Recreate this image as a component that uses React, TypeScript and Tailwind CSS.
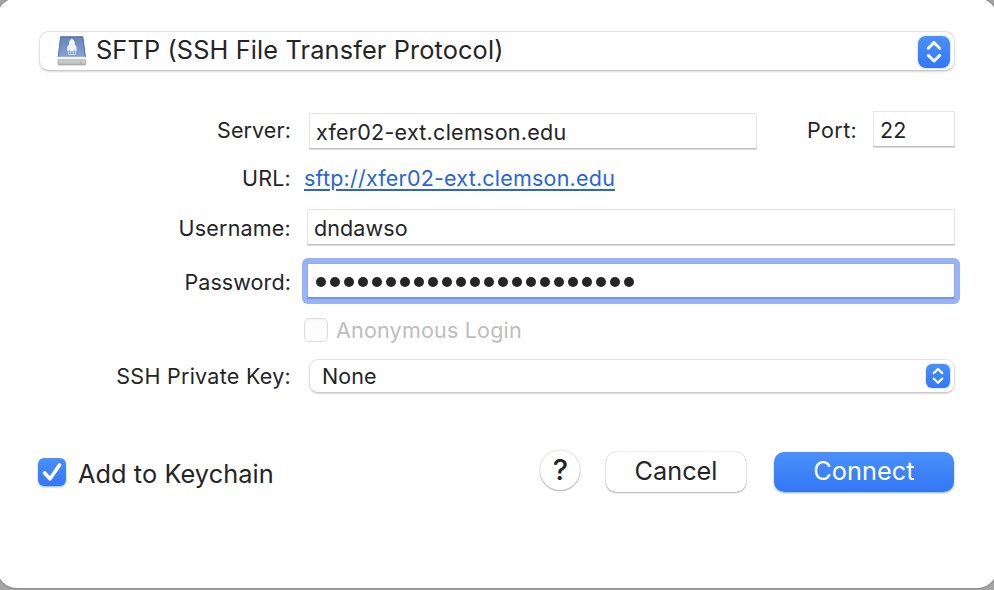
import type { ReactNode } from "react";

function Row({ className, label, labelClass = "", children }: { className: string; label?: string; labelClass?: string; children: ReactNode }) {
  return (
    <div className={`flex items-start ${className}`}>
      <div className={`w-[291px] shrink-0 text-right whitespace-nowrap leading-[26px] ${labelClass}`}>{label}</div>
      {children}
    </div>
  );
}

function Field({ className, children }: { className: string; children: ReactNode }) {
  return (
    <div
      className={`flex h-[36px] items-center border border-[#e6e6e6] border-b-[#c2c2c2] bg-white pt-[3px] pl-1.5 whitespace-nowrap shadow-[0_1px_0_#dcdcdc] ${className}`}
    >
      {children}
    </div>
  );
}

function Stepper({ className, size }: { className: string; size: number }) {
  return (
    <div
      className={`flex shrink-0 items-center justify-center bg-linear-to-b from-[#4a90f7] to-[#3377f6] shadow-[0_0_2px_#8bb5f8] ${className}`}
    >
      <svg width={size} height={size} viewBox="0 0 32 32" fill="none" stroke="white" strokeWidth="2.9" strokeLinecap="round" strokeLinejoin="round">
        <path d="M10.3 12.2 16 6.6l5.7 5.6M10.3 19.4 16 25l5.7-5.6" />
      </svg>
    </div>
  );
}

function DriveIcon() {
  return (
    <svg width="30" height="31" viewBox="0 0 30 31" className="shrink-0">
      <defs>
        <linearGradient id="lid" x1="0" y1="0" x2="0" y2="1">
          <stop offset="0" stopColor="#6684b8" />
          <stop offset="1" stopColor="#8ba4d6" />
        </linearGradient>
        <linearGradient id="base" x1="0" y1="0" x2="0" y2="1">
          <stop offset="0" stopColor="#d8d8d8" />
          <stop offset="1" stopColor="#b5b5b5" />
        </linearGradient>
      </defs>
      <path d="M3.6 0.6h22.2l3 22H1z" fill="url(#lid)" />
      <path d="M3.3 0.9h22.8" stroke="#4e6690" strokeWidth="1" />
      <path d="M3.6 1 1.2 21M25.9 1l2.5 20" stroke="#55719f" strokeWidth="1" />
      <path d="M1.1 20.8h27.6v3.2H1.1z" fill="#f6f6f6" />
      <path d="M1 23.8h27.8v4.2q0 1-1.2 1H2.2q-1.2 0-1.2-1z" fill="url(#base)" stroke="#909090" strokeWidth="0.6" />
      <circle cx="23.8" cy="26.6" r="0.8" fill="#9dab45" />
      <path d="M14.8 2.4q-2.8 1.6-2.8 4.6v1.6l-1.7 2.2v4.4h2v-1.4h.8v1.6h3.6v-1.6h.8v1.4h2v-4.4l-1.7-2.2V7q0-3-3-4.6z" fill="#f1f4fa" />
      <path d="M11.4 15.2v3.2h7v-3.2M13.4 16v2M16.4 16v2" stroke="#cdd8ee" strokeWidth="0.9" fill="none" />
    </svg>
  );
}

const popup = "flex items-center border border-[#e2e2e2] border-b-[#c9c9c9] bg-white whitespace-nowrap shadow-[0_1px_2px_rgba(0,0,0,0.15)]";

export default function App() {
  return (
    <div className="h-[590px] w-[994px] overflow-hidden bg-[#a5a5a5] font-[Inter,sans-serif] text-[21.5px] tracking-[0.1px] text-[#252525]">
      <div className="-mx-[3px] -mt-[2px] h-[590px] rounded-[20px] bg-white px-[3px] pt-[33px] shadow-[0_0_2px_#555555]">
        <div className={`ml-[39px] h-10 w-[916px] rounded-[10px] pr-1 pl-[17px] ${popup}`}>
          <DriveIcon />
          <span className="-mt-[2px] ml-[9px] grow text-[25.3px] tracking-[0.14px]">SFTP (SSH File Transfer Protocol)</span>
          <Stepper className="mt-px size-8 rounded-[8px]" size={32} />
        </div>

        <Row className="mt-10 h-[39px]" label="Server:" labelClass="pt-[6px]">
          <Field className="mt-[2px] ml-[18px] w-[448px] tracking-[0.27px]">xfer02-ext.clemson.edu</Field>
          <div className="ml-[50px] w-[51px] shrink-0 pt-[6px] leading-[26px] tracking-[0.4px]">Port:</div>
          <Field className="ml-[15px] w-[82px]">22</Field>
        </Row>
        <Row className="mt-[15px] h-[26px]" label="URL:" labelClass="tracking-[0.2px]">
          <a className="ml-[13px] leading-[26px] tracking-[0.21px] whitespace-nowrap text-[#2a65d2] underline decoration-2 underline-offset-[3px]">
            sftp://xfer02-ext.clemson.edu
          </a>
        </Row>
        <Row className="mt-[18px] h-[37px]" label="Username:" labelClass="pt-[6px] tracking-[0.2px]">
          <Field className="ml-4 w-[648px]">dndawso</Field>
        </Row>
        <Row className="mt-[17px] h-[37px]" label="Password:" labelClass="pt-[6px]">
          <div className="-mt-[5px] -mb-1 ml-[11px] h-[46px] w-[658px] shrink-0 rounded-[6px] bg-[#98b3f6] p-[5px]">
            <div className="flex h-[36px] items-center border border-[#8eabf0] border-b-2 border-b-[#7896da] bg-white pt-[2px] pl-2">
              <div className="flex gap-1">
                {Array.from({ length: 23 }, (_, i) => (
                  <span key={i} className="size-2.5 rounded-full bg-[#252525]" />
                ))}
              </div>
            </div>
          </div>
        </Row>
        <Row className="mt-[18px] h-6">
          <div className="ml-[13px] size-6 shrink-0 rounded-[5px] border border-[#dedede] bg-[#fdfdfd] shadow-[inset_0_1px_2px_rgba(0,0,0,0.06)]" />
          <span className="ml-2 leading-6 tracking-[0.2px] whitespace-nowrap text-[#bdbdbd]">Anonymous Login</span>
        </Row>
        <Row className="mt-[17px] h-[34px]" label="SSH Private Key:" labelClass="pt-[4px] tracking-[0.27px]">
          <div className={`ml-[18px] h-[34px] w-[646px] rounded-[9px] pr-1 pl-3 ${popup}`}>
            <span className="grow">None</span>
            <Stepper className="size-6 rounded-[6px]" size={24} />
          </div>
        </Row>

        <div className="mt-[57px] flex h-[43px] items-center pl-[38px] text-[25.3px] tracking-[0px]">
          <div className="flex size-7 shrink-0 items-center justify-center rounded-[6px] bg-linear-to-b from-[#4a90f7] to-[#3377f6] shadow-[0_1px_2px_#8bb5f8]">
            <svg width="28" height="28" viewBox="0 0 28 28" fill="none" stroke="white" strokeWidth="3.6" strokeLinecap="round" strokeLinejoin="round">
              <path d="m6.5 14.8 5.4 6.1L21.5 7" />
            </svg>
          </div>
          <span className="mt-1 ml-3 w-[462px] shrink-0 tracking-[0.08px] whitespace-nowrap">Add to Keychain</span>
          <div className="-mt-[3px] flex size-10 shrink-0 items-center justify-center rounded-full bg-white pl-px text-[29px] font-medium shadow-[0_1px_2px_rgba(0,0,0,0.3),0_0_1px_rgba(0,0,0,0.3)]">?</div>
          <div className="ml-[26px] flex h-10 w-[140px] shrink-0 items-center justify-center rounded-[10px] bg-white pb-[2px] shadow-[0_1px_2px_rgba(0,0,0,0.3),0_0_1px_rgba(0,0,0,0.3)]">Cancel</div>
          <div className="ml-7 flex h-10 w-[180px] shrink-0 items-center justify-center rounded-[10px] bg-linear-to-b from-[#4a90f7] to-[#3377f6] pb-[2px] tracking-[0.05px] text-white shadow-[0_1px_2px_#8bb5f8]">Connect</div>
        </div>
      </div>
    </div>
  );
}
